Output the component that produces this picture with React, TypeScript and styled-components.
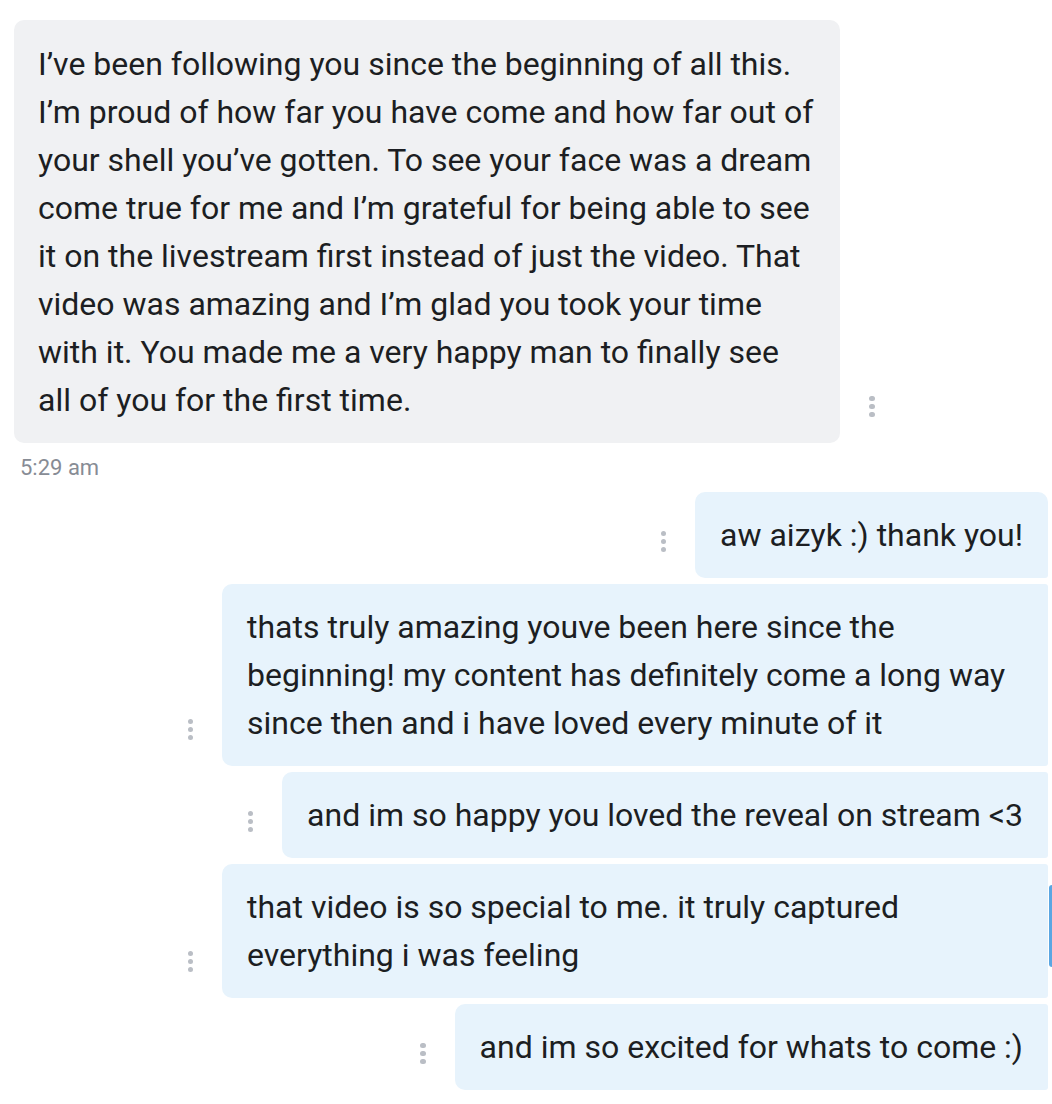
import React from "react";
import styled, { createGlobalStyle } from "styled-components";

const GlobalStyle = createGlobalStyle`
  html, body {
    margin: 0;
    padding: 0;
    background: #ffffff;
  }
  body {
    font-family: Roboto, "Noto Sans", "Liberation Sans", sans-serif;
    color: #1f2125;
    -webkit-font-smoothing: antialiased;
  }
`;

const Page = styled.div`
  position: relative;
  width: 1052px;
  height: 1104px;
  overflow: hidden;
  box-sizing: border-box;
  padding: 20px 4px 0 14px;
  display: flex;
  flex-direction: column;
`;

const Row = styled.div<{ $out?: boolean }>`
  display: flex;
  justify-content: ${(p) => (p.$out ? "flex-end" : "flex-start")};
  align-items: flex-end;
  gap: 29px;
  margin-top: ${(p) => (p.$out ? "6px" : "0")};
`;

const Bubble = styled.div<{ $out?: boolean; $first?: boolean }>`
  box-sizing: border-box;
  max-width: 826px;
  width: ${(p) => (p.$out ? "fit-content" : "826px")};
  padding: ${(p) => (p.$out ? "19px 25px 19px 25px" : "20px 24px 19px 24px")};
  background: ${(p) => (p.$out ? "#e7f3fc" : "#f0f1f3")};
  border-radius: ${(p) =>
    p.$out ? (p.$first ? "10px 10px 3px 10px" : "10px 3px 3px 10px") : "10px"};
  font-size: 32px;
  line-height: 48px;
  color: #1c1e22;
`;

const Dots = styled.div`
  flex: none;
  display: flex;
  flex-direction: column;
  gap: 2.5px;
  margin-bottom: 26px;
`;

const Dot = styled.span`
  width: 5.5px;
  height: 5.5px;
  border-radius: 50%;
  background: #babec5;
`;

const Time = styled.div`
  margin: 11px 0 4px 6px;
  font-size: 22px;
  line-height: 28px;
  color: #878c95;
`;

const ScrollThumb = styled.div`
  position: absolute;
  right: 0;
  top: 885px;
  width: 3px;
  height: 82px;
  background: #5aa6e2;
  border-radius: 3px 0 0 3px;
`;

const More = () => (
  <Dots>
    <Dot />
    <Dot />
    <Dot />
  </Dots>
);

const outgoing = [
  "aw aizyk :) thank you!",
  "thats truly amazing youve been here since the beginning! my content has definitely come a long way since then and i have loved every minute of it",
  "and im so happy you loved the reveal on stream <3",
  "that video is so special to me. it truly captured everything i was feeling",
  "and im so excited for whats to come :)",
];

export default function App() {
  return (
    <>
      <GlobalStyle />
      <Page>
        <Row>
          <Bubble>
            I’ve been following you since the beginning of all this. I’m proud of how far you
            have come and how far out of your shell you’ve gotten. To see your face was a dream
            come true for me and I’m grateful for being able to see it on the livestream first
            instead of just the video. That video was amazing and I’m glad you took your time
            with it. You made me a very happy man to finally see all of you for the first time.
          </Bubble>
          <More />
        </Row>
        <Time>5:29 am</Time>
        {outgoing.map((text, i) => (
          <Row $out key={i}>
            <More />
            <Bubble $out $first={i === 0}>
              {text}
            </Bubble>
          </Row>
        ))}
        <ScrollThumb />
      </Page>
    </>
  );
}
